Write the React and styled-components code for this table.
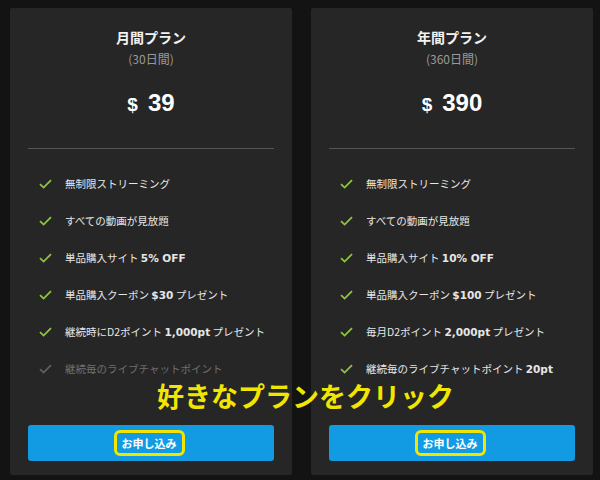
import React from "react";
import styled, { createGlobalStyle } from "styled-components";

const Global = createGlobalStyle`
  html, body { margin: 0; padding: 0; background: #131313; }
  body { font-family: "Noto Sans CJK JP", "DejaVu Sans", sans-serif; }
`;

const Page = styled.div`
  position: relative;
  width: 600px;
  height: 480px;
  box-sizing: border-box;
  padding: 8px 7px 5px 10px;
  display: flex;
  gap: 19px;
  background: #131313;
`;

const Card = styled.section`
  width: 282px;
  height: 467px;
  box-sizing: border-box;
  background: #262626;
  border-radius: 2px;
  padding: 19px 18px 14px;
  display: flex;
  flex-direction: column;
  align-items: stretch;
`;

const Title = styled.h2`
  margin: 0;
  text-align: center;
  font-size: 14px;
  line-height: 20px;
  font-weight: 700;
  color: #f2f2f2;
`;

const Sub = styled.div`
  margin-top: 4px;
  text-align: center;
  font-size: 12px;
  line-height: 16px;
  color: #9a9a9a;
`;

const Price = styled.div`
  margin-top: 22px;
  height: 30px;
  display: flex;
  justify-content: center;
  align-items: baseline;
  font-family: "Liberation Sans", Arial, sans-serif;
  font-weight: 700;
  color: #ffffff;
`;

const Dollar = styled.span`
  font-size: 19px;
  margin-right: 10px;
`;

const Amount = styled.span`
  font-size: 24px;
`;

const Divider = styled.hr`
  margin: 29px 0 0;
  border: none;
  height: 1px;
  background: #555555;
`;

const List = styled.ul`
  list-style: none;
  margin: 16px 0 0;
  padding: 0;
`;

const Item = styled.li`
  height: 37px;
  display: flex;
  align-items: center;
  padding-left: 11px;
  font-size: 10.5px;
  color: ${(p) => (p.$off ? "#6f6f6f" : "#e6e6e6")};
  b {
    font-family: "DejaVu Sans", Verdana, sans-serif;
    font-weight: 700;
    font-size: 10.5px;
  }
`;

const Tick = styled.svg`
  width: 13px;
  height: 10px;
  margin-right: 13px;
  flex: none;
`;

const Button = styled.button`
  margin-top: auto;
  height: 36px;
  border: none;
  border-radius: 3px;
  background: #129be3;
  display: flex;
  align-items: center;
  justify-content: center;
  padding: 0;
  cursor: pointer;
`;

const Ring = styled.span`
  display: inline-block;
  margin-right: 4px;
  border: 3px solid #f2e600;
  border-radius: 6px;
  padding: 3px 5px 2px;
  font-family: "Noto Sans CJK JP", sans-serif;
  font-size: 11px;
  line-height: 15px;
  font-weight: 700;
  color: #ffffff;
`;

const Callout = styled.div`
  position: absolute;
  left: 157px;
  top: 380px;
  font-family: "Noto Sans CJK JP", sans-serif;
  font-size: 27px;
  line-height: 32px;
  font-weight: 700;
  color: #f2e600;
  white-space: nowrap;
`;

const Check = ({ off }) => (
  <Tick viewBox="0 0 13 10">
    <path
      d="M1 5.2 L4.6 8.6 L12 1.2"
      fill="none"
      stroke={off ? "#5f5f5f" : "#8cc63f"}
      strokeWidth="1.8"
    />
  </Tick>
);

const plans = [
  {
    title: "月間プラン",
    sub: "(30日間)",
    price: "39",
    items: [
      { t: "無制限ストリーミング" },
      { t: "すべての動画が見放題" },
      { t: "単品購入サイト ", b: "5% OFF" },
      { t: "単品購入クーポン ", b: "$30", a: " プレゼント" },
      { t: "継続時にD2ポイント ", b: "1,000pt", a: " プレゼント" },
      { t: "継続毎のライブチャットポイント", off: true },
    ],
  },
  {
    title: "年間プラン",
    sub: "(360日間)",
    price: "390",
    items: [
      { t: "無制限ストリーミング" },
      { t: "すべての動画が見放題" },
      { t: "単品購入サイト ", b: "10% OFF" },
      { t: "単品購入クーポン ", b: "$100", a: " プレゼント" },
      { t: "毎月D2ポイント ", b: "2,000pt", a: " プレゼント" },
      { t: "継続毎のライブチャットポイント ", b: "20pt" },
    ],
  },
];

export default function App() {
  return (
    <>
      <Global />
      <Page>
        {plans.map((p) => (
          <Card key={p.title}>
            <Title>{p.title}</Title>
            <Sub>{p.sub}</Sub>
            <Price>
              <Dollar>$</Dollar>
              <Amount>{p.price}</Amount>
            </Price>
            <Divider />
            <List>
              {p.items.map((it, i) => (
                <Item key={i} $off={it.off}>
                  <Check off={it.off} />
                  <span>
                    {it.t}
                    {it.b && <b>{it.b}</b>}
                    {it.a}
                  </span>
                </Item>
              ))}
            </List>
            <Button>
              <Ring>お申し込み</Ring>
            </Button>
          </Card>
        ))}
        <Callout>好きなプランをクリック</Callout>
      </Page>
    </>
  );
}
